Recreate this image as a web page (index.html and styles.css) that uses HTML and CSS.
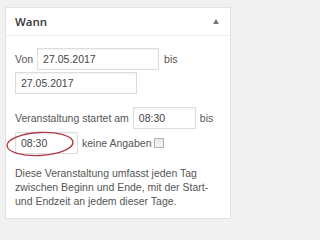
FILE: index.html
```html
<!DOCTYPE html>
<html lang="de">
<head>
<meta charset="utf-8">
<link rel="stylesheet" href="styles.css">
</head>
<body>
<div class="box">
  <div class="box-head">
    <span class="box-title">Wann</span>
    <span class="toggle"></span>
  </div>
  <div class="box-body">
    <div class="row row-dates">
      <span class="lbl">Von</span>
      <span class="field f-date">27.05.2017</span>
      <span class="lbl">bis</span>
      <span class="field f-date2">27.05.2017</span>
    </div>
    <div class="row row-times">
      <span class="lbl">Veranstaltung startet am</span>
      <span class="field f-time">08:30</span>
      <span class="lbl">bis</span>
      <span class="marked">
        <span class="field f-time2">08:30</span>
        <svg class="ring" width="70" height="28" viewBox="0 0 70 28"><ellipse cx="35" cy="14" rx="33" ry="11.5" fill="none" stroke="#b13a44" stroke-width="1.4" transform="rotate(-3 35 14)"/></svg>
      </span>
      <span class="lbl lbl-none">keine Angaben</span>
      <span class="check"></span>
    </div>
    <p class="note">Diese Veranstaltung umfasst jeden Tag zwischen Beginn und Ende, mit der Start- und Endzeit an jedem dieser Tage.</p>
  </div>
</div>
</body>
</html>
```
FILE: styles.css
```css
html, body {
  margin: 0;
  padding: 0;
  background: #f1f1f1;
}
body {
  font-family: "Liberation Sans", Arial, sans-serif;
  font-size: 10.5px;
  color: #555;
  padding: 7px 0 0 5px;
}
.box {
  width: 226px;
  background: #fff;
  border: 1px solid #e3e3e3;
  box-shadow: 0 1px 1px rgba(0,0,0,0.04);
  height: 212px;
  box-sizing: border-box;
}
.box-head {
  height: 28px;
  border-bottom: 1px solid #eeeeee;
  display: flex;
  align-items: center;
  justify-content: space-between;
  padding: 0 11px 0 9px;
  box-sizing: border-box;
}
.box-title {
  font-family: "Open Sans", sans-serif;
  font-size: 11.5px;
  font-weight: 600;
  color: #333;
}
.toggle {
  width: 0;
  height: 0;
  border-left: 3.5px solid transparent;
  border-right: 3.5px solid transparent;
  border-bottom: 5px solid #777;
  margin-top: -1px;
}
.box-body {
  padding: 12px 8px 0 9px;
}
.row {
  display: flex;
  flex-wrap: wrap;
  align-items: center;
  row-gap: 2px;
}
.lbl {
  line-height: 22px;
}
.field {
  box-sizing: border-box;
  height: 22px;
  border: 1px solid #dddddd;
  box-shadow: inset 0 1px 2px rgba(0,0,0,0.06);
  background: #fff;
  color: #444;
  padding-left: 5px;
  line-height: 20px;
  font-size: 10.5px;
}
.f-date {
  width: 122px;
  margin: 0 5px 0 4px;
}
.f-date2 {
  width: 122px;
}
.row-times {
  margin-top: 13px;
  row-gap: 3px;
}
.f-time {
  width: 63px;
  margin: 0 4px 0 4px;
}
.marked {
  position: relative;
  display: block;
}
.f-time2 {
  display: block;
  width: 63px;
}
.ring {
  position: absolute;
  left: -10px;
  top: -2px;
}
.lbl-none {
  margin-left: 4px;
}
.check {
  box-sizing: border-box;
  width: 10px;
  height: 10px;
  border: 1px solid #b4b4b4;
  background: linear-gradient(#e8e8e8, #f6f6f6);
  margin-left: 3px;
}
.note {
  margin: 12px 0 0 0;
  line-height: 14px;
  color: #555;
}
```
